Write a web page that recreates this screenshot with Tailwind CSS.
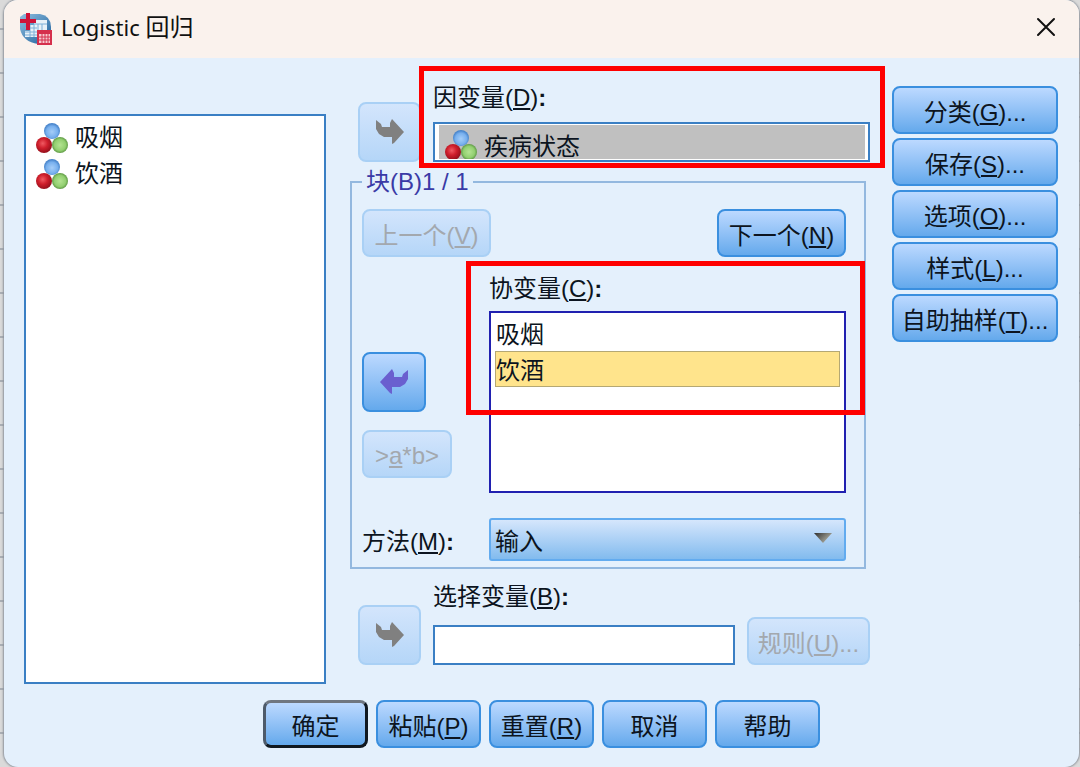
<!DOCTYPE html>
<html lang="zh-CN">
  <head>
    <meta charset="UTF-8" />
    <meta name="viewport" content="width=device-width, initial-scale=1.0" />
    <script src="https://cdn.jsdelivr.net/npm/@tailwindcss/browser@4"></script>
    <title>Logistic 回归</title>
  </head>
  <body class="bg-[#dadada] bg-[repeating-linear-gradient(to_bottom,transparent_0px,transparent_28px,#a9adb3_28px,#a9adb3_30px,transparent_30px,transparent_44px)] pl-1 pr-px font-['Liberation_Sans','Noto_Sans_CJK_SC',sans-serif] text-2xl leading-7 text-[#0c1420]">
    <!-- shared symbols -->
    <svg class="absolute h-0 w-0" aria-hidden="true">
      <defs>
        <radialGradient id="blue" cx="50%" cy="55%" r="50%">
          <stop offset="0" stop-color="#a5cdf8" /><stop offset="0.7" stop-color="#78b0ee" /><stop offset="1" stop-color="#4a86cc" />
        </radialGradient>
        <radialGradient id="red" cx="42%" cy="40%" r="60%">
          <stop offset="0" stop-color="#f05a62" /><stop offset="0.5" stop-color="#cf1f2c" /><stop offset="1" stop-color="#96101c" />
        </radialGradient>
        <radialGradient id="green" cx="50%" cy="50%" r="50%">
          <stop offset="0" stop-color="#b4e392" /><stop offset="0.7" stop-color="#92cf70" /><stop offset="1" stop-color="#5f9a45" />
        </radialGradient>
        <linearGradient id="tri" x1="0" y1="0" x2="1" y2="0.6">
          <stop offset="0" stop-color="#2e2e2e" /><stop offset="1" stop-color="#b5b5a8" />
        </linearGradient>
        <symbol id="nominal" viewBox="0 0 32 32">
          <circle cx="16" cy="9" r="8" fill="url(#blue)" />
          <circle cx="8" cy="23" r="8" fill="url(#red)" />
          <circle cx="24" cy="23" r="8" fill="url(#green)" />
        </symbol>
        <symbol id="arrow" viewBox="0 0 28 26">
          <path d="M0 1 L5 5 L6 8 L14 8 L14 4 L16 0 L28 13 L18 24 L16 25 L16 18 L8 18 L3 15 L0 10 Z" />
        </symbol>
      </defs>
    </svg>

    <div class="flex min-h-screen flex-col overflow-hidden rounded-[14px] bg-[#e4f0fc] shadow-[0_0_2px_1px_#8f949c]">
      <header class="flex h-[58px] items-center justify-between bg-[#faf2ed] pl-4 pr-[23px]">
        <div class="flex items-center gap-[9px]">
          <svg class="h-8 w-8" viewBox="0 0 32 32">
            <defs>
              <linearGradient id="globe" x1="0" y1="0" x2="1" y2="1">
                <stop offset="0" stop-color="#8fbfe0" /><stop offset="1" stop-color="#1d5f9b" />
              </linearGradient>
            </defs>
            <path d="M4 1 H20 Q31 3 31 14 V31 H18 Q3 29 0 16 V4 Z" fill="url(#globe)" />
            <path d="M14 7 H27 V17 H17 V24 H5 V18 H10 V12 H14 Z" fill="#e8f1f8" />
            <path d="M5 15 H17 M5 19 H17 M5 22 H17 M10 12 V24 M14 11 V24 M14 11 H27 M18 11 V17 M22 11 V17" stroke="#7fb0d8" />
            <rect x="17" y="17" width="15" height="15" fill="#d52f4c" />
            <path d="M19 21 H30 V30 H19 Z" fill="#f6c9cf" />
            <path d="M19 24 H30 M19 27 H30 M22 21 V30 M25 21 V30 M28 21 V30" stroke="#d52f4c" />
            <path d="M6 0 H10 V6 H16 V10 H10 V17 H6 V10 H0 V6 H6 Z" fill="#cf1238" />
          </svg>
          <h1 class="pb-1 font-['Noto_Sans','Noto_Sans_CJK_SC',sans-serif] text-[22px] text-[#111]">Logistic <span class="text-2xl">回归</span></h1>
        </div>
        <button type="button" aria-label="关闭" class="mb-1">
          <svg class="h-5 w-5" viewBox="0 0 20 20" fill="none" stroke="#111" stroke-width="2" stroke-linecap="round"><path d="M2 2 L18 18 M18 2 L2 18" /></svg>
        </button>
      </header>

      <main class="grid grid-cols-[326fr_542fr_166px] items-start pl-5 pr-[21px]">
        <!-- source variables -->
        <ul role="listbox" aria-label="变量" tabindex="0" class="mt-14 mr-6 h-[570px] border-2 border-[#3a7fc4] bg-white pt-1 pl-2.5">
          <li role="option" class="flex h-9 items-center gap-[7px]"><svg class="h-8 w-8"><use href="#nominal" /></svg>吸烟</li>
          <li role="option" class="flex h-9 items-center gap-[7px]"><svg class="h-8 w-8"><use href="#nominal" /></svg>饮酒</li>
        </ul>

        <div class="mr-[22px] min-w-0">
          <div class="flex pt-[26px] pl-2">
            <button type="button" disabled aria-label="移入因变量" class="mt-[18px] mr-3 flex h-[60px] w-[63px] items-center justify-center rounded-lg border-2 border-[#a9d0f5] bg-linear-to-b from-[#d3e5fc] to-[#b5d6f8]">
              <svg class="h-[26px] w-7 fill-[#808080]"><use href="#arrow" /></svg>
            </button>
            <div class="relative flex-1">
              <label for="dependent" class="block">因变量(<u class="underline-offset-2">D</u>)<b>:</b></label>
              <div class="mt-2.5 h-10 border-2 border-[#3a7fc4] bg-white pt-px pr-[3px] pb-px pl-1">
                <div class="flex h-full gap-[7px] overflow-hidden bg-[#c0c0c0] pt-1 pl-1.5">
                  <svg class="h-8 w-8 shrink-0"><use href="#nominal" /></svg>
                  <input id="dependent" type="text" readonly value="疾病状态" class="h-[30px] w-full min-w-0 bg-transparent outline-none" />
                </div>
              </div>
              <div class="pointer-events-none absolute -top-[18px] -right-[15px] -bottom-[6px] -left-[14px] border-5 border-[#fe0000]"></div>
            </div>
          </div>

          <fieldset class="mt-1.5 mr-1 border-2 border-[#93b8df] pr-[18px] pb-1.5 pl-2.5">
            <legend class="px-1 text-[#3a3aa6]">块(B)1 / 1</legend>
            <div class="flex justify-between pt-[13px]">
              <button type="button" disabled class="h-12 w-[129px] rounded-lg border-2 border-[#a9d0f5] bg-linear-to-b from-[#d3e5fc] to-[#b5d6f8] pt-1.5 text-[#a3a8ae]">上一个(<u class="underline-offset-2">V</u>)</button>
              <button type="button" class="h-12 w-[129px] rounded-lg border-2 border-[#3a8fdf] bg-linear-to-b from-[#bcd9ff] to-[#64a9ec] pt-1.5">下一个(<u class="underline-offset-2">N</u>)</button>
            </div>

            <div class="mt-[18px] flex">
              <div class="flex w-[127px] shrink-0 flex-col items-start gap-[18px] pt-[77px]">
                <button type="button" aria-label="移出协变量" class="flex h-[60px] w-16 items-center justify-center rounded-lg border-2 border-[#3a8fdf] bg-linear-to-b from-[#bcd9ff] to-[#64a9ec]">
                  <svg class="h-[26px] w-7 -scale-x-100 fill-[#6a5fcf]"><use href="#arrow" /></svg>
                </button>
                <button type="button" disabled class="h-12 w-[90px] rounded-lg border-2 border-[#a9d0f5] bg-linear-to-b from-[#d3e5fc] to-[#b5d6f8] pt-1 text-[#a3a8ae]">&gt;<u class="underline-offset-2">a</u>*b&gt;</button>
              </div>
              <div class="relative flex-1">
                <span id="covariates" class="block">协变量(<u class="underline-offset-2">C</u>)<b>:</b></span>
                <ul role="listbox" aria-labelledby="covariates" tabindex="0" class="mt-2 h-[182px] border-2 border-[#2020b0] bg-white px-1 py-0.5">
                  <li role="option" class="flex h-9 items-center border border-transparent pt-1">吸烟</li>
                  <li role="option" aria-selected="true" class="flex h-9 items-center border border-[#b5a873] bg-[#ffe48c] pt-1">饮酒</li>
                </ul>
                <div class="pointer-events-none absolute -top-3.5 -right-[19px] bottom-[78px] -left-[23px] border-5 border-[#fe0000]"></div>
              </div>
            </div>

            <div class="mt-[25px] flex items-center">
              <label for="method" class="w-[127px] shrink-0 pt-1">方法(<u class="underline-offset-2">M</u>)<b>:</b></label>
              <div class="relative flex-1">
                <select id="method" class="block h-[43px] w-full appearance-none rounded-[3px] border-2 border-[#62abef] bg-linear-to-b from-[#d5e6fc] to-[#82bbee] pt-1 pl-1">
                  <option>输入</option>
                </select>
                <svg class="pointer-events-none absolute top-[15px] right-3.5 h-2.5 w-[18px]" viewBox="0 0 18 10"><path d="M0 0 H18 L9 10 Z" fill="url(#tri)" /></svg>
              </div>
            </div>
          </fieldset>

          <div class="mt-3.5 flex items-end pl-2">
            <button type="button" disabled aria-label="移入选择变量" class="mr-3 flex h-[60px] w-[63px] items-center justify-center rounded-lg border-2 border-[#a9d0f5] bg-linear-to-b from-[#d3e5fc] to-[#b5d6f8]">
              <svg class="h-[26px] w-7 fill-[#808080]"><use href="#arrow" /></svg>
            </button>
            <div class="mr-3 flex-1">
              <label for="selection" class="block">选择变量(<u class="underline-offset-2">B</u>)<b>:</b></label>
              <input id="selection" type="text" class="mt-3.5 block h-10 w-full border-2 border-[#3a7fc4] bg-white px-1 outline-none" />
            </div>
            <button type="button" disabled class="h-12 w-[123px] rounded-lg border-2 border-[#a9d0f5] bg-linear-to-b from-[#d3e5fc] to-[#b5d6f8] pt-1.5 text-[#a3a8ae]">规则(<u class="underline-offset-2">U</u>)...</button>
          </div>
        </div>

        <div class="flex flex-col gap-1 pt-7">
          <button type="button" class="h-12 rounded-lg border-2 border-[#3a8fdf] bg-linear-to-b from-[#bcd9ff] to-[#64a9ec] pt-1.5">分类(<u class="underline-offset-2">G</u>)...</button>
          <button type="button" class="h-12 rounded-lg border-2 border-[#3a8fdf] bg-linear-to-b from-[#bcd9ff] to-[#64a9ec] pt-1.5">保存(<u class="underline-offset-2">S</u>)...</button>
          <button type="button" class="h-12 rounded-lg border-2 border-[#3a8fdf] bg-linear-to-b from-[#bcd9ff] to-[#64a9ec] pt-1.5">选项(<u class="underline-offset-2">O</u>)...</button>
          <button type="button" class="h-12 rounded-lg border-2 border-[#3a8fdf] bg-linear-to-b from-[#bcd9ff] to-[#64a9ec] pt-1.5">样式(<u class="underline-offset-2">L</u>)...</button>
          <button type="button" class="h-12 rounded-lg border-2 border-[#3a8fdf] bg-linear-to-b from-[#bcd9ff] to-[#64a9ec] pt-1.5">自助抽样(<u class="underline-offset-2">T</u>)...</button>
        </div>
      </main>

      <footer class="flex justify-center gap-2 pt-4 pb-[18px]">
        <button type="button" class="h-12 w-[105px] rounded-lg border-3 border-t-[#6f7680] border-r-[#101820] border-b-[#101820] border-l-[#4d5a6a] bg-linear-to-b from-[#bcd9ff] to-[#64a9ec] pt-1.5">确定</button>
        <button type="button" class="h-12 w-[105px] rounded-lg border-2 border-[#3a8fdf] bg-linear-to-b from-[#bcd9ff] to-[#64a9ec] pt-1.5">粘贴(<u class="underline-offset-2">P</u>)</button>
        <button type="button" class="h-12 w-[105px] rounded-lg border-2 border-[#3a8fdf] bg-linear-to-b from-[#bcd9ff] to-[#64a9ec] pt-1.5">重置(<u class="underline-offset-2">R</u>)</button>
        <button type="button" class="h-12 w-[105px] rounded-lg border-2 border-[#3a8fdf] bg-linear-to-b from-[#bcd9ff] to-[#64a9ec] pt-1.5">取消</button>
        <button type="button" class="h-12 w-[105px] rounded-lg border-2 border-[#3a8fdf] bg-linear-to-b from-[#bcd9ff] to-[#64a9ec] pt-1.5">帮助</button>
      </footer>
    </div>
  </body>
</html>
